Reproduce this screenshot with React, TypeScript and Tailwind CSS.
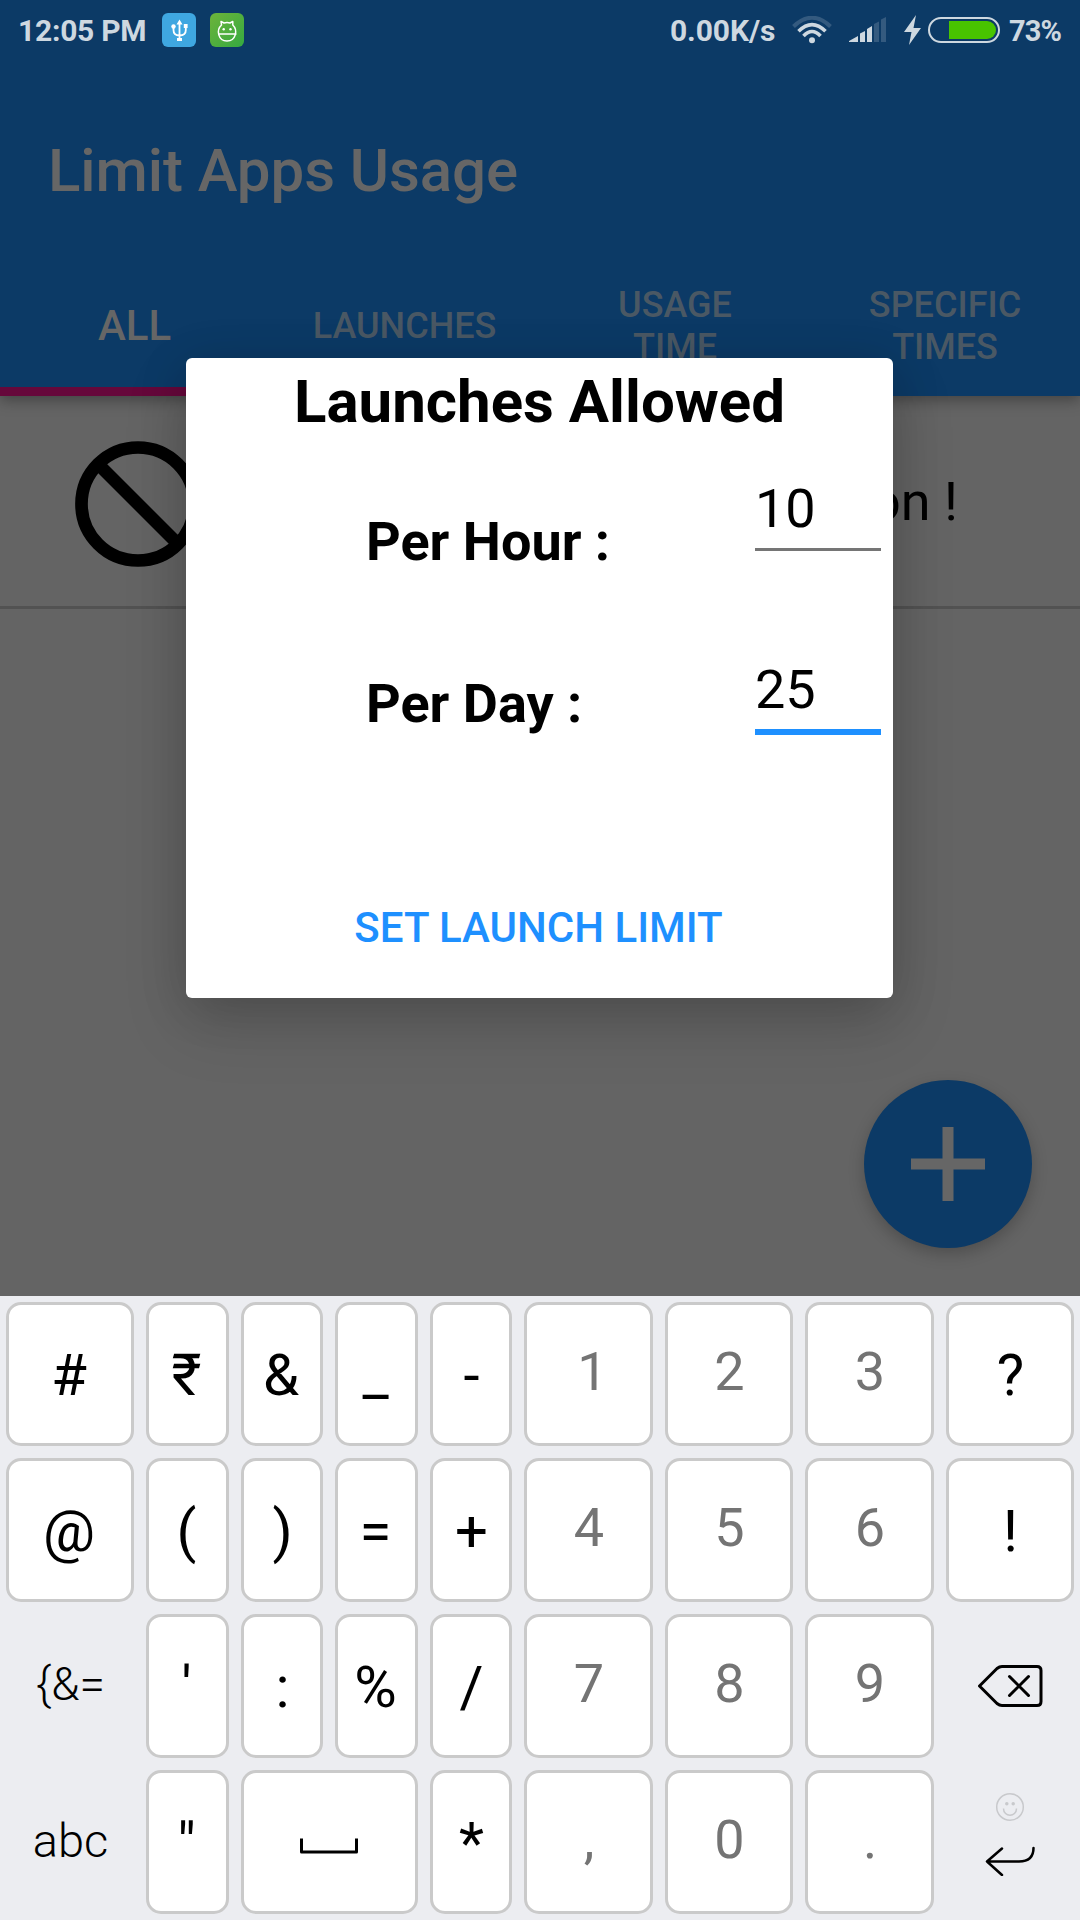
import React from "react";

type KeyDef = {
  id: string;
  label?: string;
  kind: "symbol" | "digit" | "flat" | "space" | "backspace" | "enter";
};

const sym = (label: string): KeyDef => ({ id: label, label, kind: "symbol" });
const digit = (label: string): KeyDef => ({ id: label, label, kind: "digit" });

const KEYS: KeyDef[] = [
  sym("#"), sym("₹"), sym("&"), sym("_"), sym("-"), digit("1"), digit("2"), digit("3"), sym("?"),
  sym("@"), sym("("), sym(")"), sym("="), sym("+"), digit("4"), digit("5"), digit("6"), sym("!"),
  { id: "more", label: "{&=", kind: "flat" },
  sym("'"), sym(":"), sym("%"), sym("/"), digit("7"), digit("8"), digit("9"),
  { id: "backspace", kind: "backspace" },
  { id: "abc", label: "abc", kind: "flat" },
  sym('"'), { id: "space", kind: "space" }, sym("*"), digit(","), digit("0"), digit("."),
  { id: "enter", kind: "enter" },
];

const CAP = "flex items-center justify-center rounded-[15px] border-3 border-[#cacaca] bg-white leading-none";

function Key({ k }: { k: KeyDef }) {
  switch (k.kind) {
    case "symbol":
      return (
        <button className={`${CAP} pt-[2px] text-[58px] text-black ${"-+/*!?:)".includes(k.id) ? "pl-px" : "pr-[2px]"}`}>
          {k.label}
        </button>
      );
    case "digit":
      return (
        <button className={`${CAP} pb-[4px] text-[54px] text-[#747474] ${k.id === "1" ? "pl-[8px]" : "pl-px"}`}>
          {k.label}
        </button>
      );
    case "flat":
      return (
        <button
          className={`flex items-center justify-center pb-1 pl-px font-light leading-none text-black ${
            k.id === "abc" ? "text-[47px]" : "text-[46px]"
          }`}
        >
          {k.label}
        </button>
      );
    case "space":
      return (
        <button className={`${CAP} col-span-2 pr-px pt-[8px]`}>
          <svg width="58" height="16" viewBox="0 0 58 16" fill="none" stroke="black" strokeWidth="3">
            <path d="M1.5 0.5V14H56.5V0.5" strokeLinejoin="round" />
          </svg>
        </button>
      );
    case "backspace":
      return (
        <button className="flex items-center justify-center">
          <svg width="66" height="44" viewBox="0 0 66 44" fill="none" stroke="black" strokeWidth="3" strokeLinecap="round" strokeLinejoin="round">
            <path d="M2.5 22L20 4.5Q22.5 2.5 25 2.5H60Q64 2.5 64 6.5V37.500Q64 41.500 60 41.500H25Q22.500 41.500 20 39.500Z" />
            <path d="M32.500 12.500L51.500 31.500M51.500 12.500L32.500 31.500" />
          </svg>
        </button>
      );
    case "enter":
      return (
        <button className="flex flex-col items-center pt-[22px]">
          <svg width="30" height="30" viewBox="0 0 30 30" fill="none" stroke="#c8c9cc" strokeWidth="1.500">
            <circle cx="15" cy="15" r="13.300" />
            <path d="M8.500 16.500C8.500 25.500 21.500 25.500 21.500 16.500" />
            <circle cx="11.800" cy="11.800" r="1" fill="#c8c9cc" />
            <circle cx="18.200" cy="11.800" r="1" fill="#c8c9cc" />
          </svg>
          <svg className="mt-[24px]" width="50" height="30" viewBox="0 0 50 30" fill="none" stroke="black" strokeWidth="2.500" strokeLinecap="round" strokeLinejoin="round">
            <path d="M17 2.500L2 15.500L17 29M2 15.500H34Q48.500 15.500 48.500 2" />
          </svg>
        </button>
      );
  }
}

function Keyboard() {
  return (
    <div className="grid h-[624px] grid-cols-[128px_83px_82px_83px_82px_129px_128px_129px_128px] grid-rows-[repeat(4,144px)] gap-3 bg-[#ecedf1] p-1.5">
      {KEYS.map((k) => (
        <Key key={k.id} k={k} />
      ))}
    </div>
  );
}

function StatusBar() {
  return (
    <div className="flex h-[60px] items-center whitespace-nowrap pl-[18px] text-[30px] font-bold leading-none text-[#ced8e0]">
      <span className="mt-[2px] w-[144px] tracking-[-0.25px]">12:05 PM</span>
      <svg width="34" height="34" viewBox="0 0 34 34" fill="none">
        <rect width="34" height="34" rx="6" fill="#3fa7e1" />
        <g stroke="white" strokeWidth="1.800">
          <path d="M17.500 9V27M11.500 14V17Q11.500 22.500 17.500 22.500Q23.800 22.500 23.800 17V13" />
        </g>
        <path d="M17.500 6.500L20.500 11.500H14.500ZM15 25H20V28H15Z" fill="white" />
        <circle cx="11.500" cy="13.500" r="2.200" fill="white" />
        <rect x="21.800" y="11" width="3.800" height="4" fill="white" />
      </svg>
      <svg className="ml-[14px]" width="34" height="34" viewBox="0 0 34 34" fill="none">
        <defs>
          <linearGradient id="droid" x1="0" y1="0" x2="1" y2="1">
            <stop stopColor="#6db33a" />
            <stop offset="1" stopColor="#35aa41" />
          </linearGradient>
        </defs>
        <rect width="34" height="34" rx="6" fill="url(#droid)" />
        <path
          d="M11.500 12L11 8.500L14 10Q17 9 20 10L22.800 8.500L22.800 12C28 17 26 28 17 28C8 28 6 17 11.500 12ZM8 21H26.500"
          stroke="white"
          strokeWidth="1.500"
          strokeLinejoin="round"
        />
        <circle cx="13.700" cy="16.300" r="1.200" fill="white" />
        <circle cx="20.500" cy="16.300" r="1.200" fill="white" />
      </svg>
      <span className="ml-auto mt-[2px] w-[122px] tracking-[-0.1px]">0.00K/s</span>
      <svg width="40" height="28" viewBox="0 0 40 28" fill="none" stroke="#ced8e0">
        <path d="M1.500 10.500Q20 -7 38.500 10.500" stroke="#345a7f" strokeWidth="4" />
        <path d="M6.500 15.300Q20 2 33.500 15.300" strokeWidth="3.600" />
        <path d="M11.500 20Q20 11 28.500 20" strokeWidth="3.600" />
        <circle cx="20" cy="24.200" r="3" fill="#ced8e0" stroke="none" />
      </svg>
      <svg className="ml-[17px]" width="38" height="26" viewBox="0 0 38 26" fill="#ced8e0">
        <path d="M0 25V24L9 19V25ZM11 25V16.500L16 14V25ZM18 25V12L23 9V25Z" />
        <path d="M25 25V7L30 4.500V25ZM32 25V2.500L37 0V25Z" fill="#345a7f" />
      </svg>
      <svg className="ml-[17px]" width="17" height="30" viewBox="0 0 17 30" fill="#ced8e0">
        <path d="M12 0L0 17H7.500L5 30L17 13H9.500Z" />
      </svg>
      <div className="ml-[7px] h-[26px] w-[72px] rounded-full border-2 border-[#ced8e0] py-[2px] pl-[19px] pr-[2px]">
        <div className="h-full rounded-r-full bg-[#48c400]" />
      </div>
      <span className="ml-[9px] mt-[2px] w-[71px] text-[29px] tracking-[-0.9px]">73%</span>
    </div>
  );
}

function Header() {
  return (
    <header className="relative bg-[#0c3a66] shadow-[0_4px_14px_rgba(0,0,0,0.35)]">
      <StatusBar />
      <div className="flex h-[196px] items-center pl-12 pt-[25px] text-[60px] font-medium leading-none tracking-[-0.08px] text-[#666666]">
        Limit Apps Usage
      </div>
      <nav className="grid h-[140px] grid-cols-4 text-center text-[36px] font-medium leading-[42px] text-[#4a5864]">
        <div className="flex items-center justify-center border-b-9 border-[#66083b] pr-px pt-[9px] text-[42px] text-[#666666]">
          ALL
        </div>
        <div className="flex items-center justify-center pr-px">LAUNCHES</div>
        <div className="flex items-center justify-center">USAGE<br />TIME</div>
        <div className="flex items-center justify-center">SPECIFIC<br />TIMES</div>
      </nav>
    </header>
  );
}

function LimitRow({ label, value, active }: { label: string; value: string; active?: boolean }) {
  return (
    <div className="flex h-[181px] items-start justify-between pl-[180px] pr-3 pt-6 text-[54px]">
      <span className={`font-bold leading-[64px] ${active ? "mt-[22px]" : "mt-[41px]"}`}>{label}</span>
      <div
        className={`w-[126px] leading-[79px] ${
          active ? "border-b-6 border-[#1e90ff]" : "border-b-3 border-[#757575]"
        }`}
      >
        {value}
      </div>
    </div>
  );
}

function LaunchDialog() {
  return (
    <div
      role="dialog"
      className="absolute left-[186px] top-[358px] flex h-[640px] w-[707px] flex-col rounded-[6px] bg-white text-black shadow-[0_26px_64px_rgba(0,0,0,0.15),0_6px_50px_rgba(0,0,0,0.14)]"
    >
      <h2 className="flex h-[87px] items-center justify-center text-[60px] font-bold leading-none">Launches Allowed</h2>
      <LimitRow label="Per Hour :" value="10" />
      <LimitRow label="Per Day :" value="25" active />
      <button className="mt-auto h-[141px] pr-[2px] text-[42px] font-medium text-[#1e90ff]">SET LAUNCH LIMIT</button>
    </div>
  );
}

export default function App() {
  return (
    <div className="relative flex h-[1920px] w-[1080px] flex-col overflow-hidden bg-[#646464] font-['Roboto',sans-serif]">
      <div className="relative flex-1">
        <Header />
        <div className="flex h-[213px] items-center justify-between border-b-3 border-[#525252] pl-[75px] pr-[122px] text-[54px] text-black">
          <svg className="mt-[6px]" width="126" height="126" viewBox="0 0 126 126" fill="none" stroke="black" strokeWidth="12.700">
            <circle cx="63" cy="63" r="56.500" />
            <path d="M23 23L103 103" />
          </svg>
          <span>on !</span>
        </div>
        <button className="absolute bottom-12 right-12 flex size-[168px] items-center justify-center rounded-full bg-[#0c3a66] shadow-[0_6px_16px_rgba(0,0,0,0.22)]">
          <svg width="74" height="74" viewBox="0 0 74 74" stroke="#666666" strokeWidth="11">
            <path d="M37 0V74M0 37H74" />
          </svg>
        </button>
      </div>
      <Keyboard />
      <LaunchDialog />
    </div>
  );
}
